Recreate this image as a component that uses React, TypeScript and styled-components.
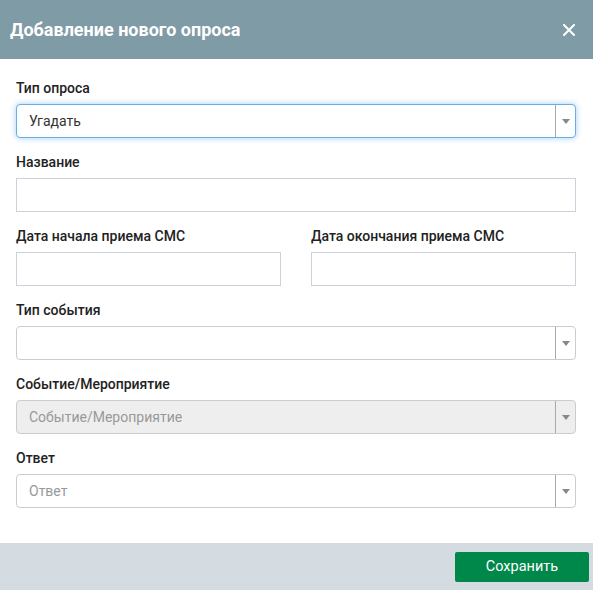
import React from "react";
import styled, { createGlobalStyle } from "styled-components";

const Global = createGlobalStyle`
  html, body { margin: 0; padding: 0; background: #fff; }
  body { font-family: Roboto, "Liberation Sans", Arial, sans-serif; }
  * { box-sizing: border-box; }
`;

const Modal = styled.div`
  width: 593px;
  height: 590px;
  display: flex;
  flex-direction: column;
  background: #fff;
`;

const Header = styled.div`
  height: 59px;
  background: #7f9ba6;
  display: flex;
  align-items: center;
  justify-content: space-between;
  padding: 0 17px 0 10px;
`;

const Title = styled.h1`
  margin: 0;
  font-size: 18px;
  font-weight: 700;
  color: #fff;
`;

const CloseBtn = styled.button`
  border: 0;
  background: none;
  padding: 0;
  width: 14px;
  height: 14px;
  display: flex;
  align-items: center;
  justify-content: center;
  cursor: pointer;
`;

const Body = styled.div`
  flex: 1;
  padding: 19px 17px 0 16px;
`;

const Field = styled.div`
  display: flex;
  flex-direction: column;
  margin-bottom: 14px;
  flex: 1;
`;

const Label = styled.label`
  font-size: 14px;
  line-height: 20px;
  font-weight: 500;
  color: #222;
  margin-bottom: 6px;
`;

const Row = styled.div`
  display: flex;
  gap: 30px;
`;

const TextInput = styled.input`
  height: 34px;
  width: 100%;
  border: 1px solid #ccd2da;
  background: #fff;
  font-family: inherit;
  font-size: 14px;
  padding: 0 12px;
  outline: none;
`;

const SelectBox = styled.div<{ $focused?: boolean; $disabled?: boolean }>`
  height: 34px;
  display: flex;
  align-items: stretch;
  border: 1px solid ${(p) => (p.$focused ? "#66afe9" : "#cccccc")};
  border-radius: 4px;
  background: ${(p) => (p.$disabled ? "#eeeeee" : "#fff")};
  box-shadow: ${(p) => (p.$focused ? "0 0 6px rgba(102,175,233,0.6)" : "none")};
`;

const SelectValue = styled.div<{ $placeholder?: boolean }>`
  flex: 1;
  display: flex;
  align-items: center;
  padding: 0 12px;
  font-size: 14px;
  color: ${(p) => (p.$placeholder ? "#999" : "#333")};
`;

const ArrowZone = styled.div`
  width: 20px;
  display: flex;
  align-items: center;
  justify-content: center;
  border-left: 1px solid #aaa;
`;

const Arrow = styled.span`
  width: 0;
  height: 0;
  border-left: 4px solid transparent;
  border-right: 4px solid transparent;
  border-top: 5px solid #888;
  margin-left: 1px;
`;

const Footer = styled.div`
  height: 47px;
  background: #d4dbe1;
  display: flex;
  justify-content: flex-end;
  align-items: center;
  padding: 0 4px 0 0;
`;

const SaveBtn = styled.button`
  width: 134px;
  height: 30px;
  border: 0;
  border-radius: 2px;
  background: #00874a;
  color: #fff;
  font-family: inherit;
  font-size: 14.5px;
  cursor: pointer;
`;

function Select({ value, placeholder, focused, disabled }: { value?: string; placeholder?: string; focused?: boolean; disabled?: boolean }) {
  return (
    <SelectBox $focused={focused} $disabled={disabled}>
      <SelectValue $placeholder={!value}>{value || placeholder || ""}</SelectValue>
      <ArrowZone>
        <Arrow />
      </ArrowZone>
    </SelectBox>
  );
}

export default function App() {
  return (
    <>
      <Global />
      <Modal>
        <Header>
          <Title>Добавление нового опроса</Title>
          <CloseBtn aria-label="close">
            <svg width="12" height="12" viewBox="0 0 12 12">
              <path d="M1 1L11 11M11 1L1 11" stroke="#fff" strokeWidth="2" strokeLinecap="square" />
            </svg>
          </CloseBtn>
        </Header>
        <Body>
          <Field>
            <Label>Тип опроса</Label>
            <Select value="Угадать" focused />
          </Field>
          <Field>
            <Label>Название</Label>
            <TextInput />
          </Field>
          <Row>
            <Field>
              <Label>Дата начала приема СМС</Label>
              <TextInput />
            </Field>
            <Field>
              <Label>Дата окончания приема СМС</Label>
              <TextInput />
            </Field>
          </Row>
          <Field>
            <Label>Тип события</Label>
            <Select />
          </Field>
          <Field>
            <Label>Событие/Мероприятие</Label>
            <Select placeholder="Событие/Мероприятие" disabled />
          </Field>
          <Field>
            <Label>Ответ</Label>
            <Select placeholder="Ответ" />
          </Field>
        </Body>
        <Footer>
          <SaveBtn>Сохранить</SaveBtn>
        </Footer>
      </Modal>
    </>
  );
}
